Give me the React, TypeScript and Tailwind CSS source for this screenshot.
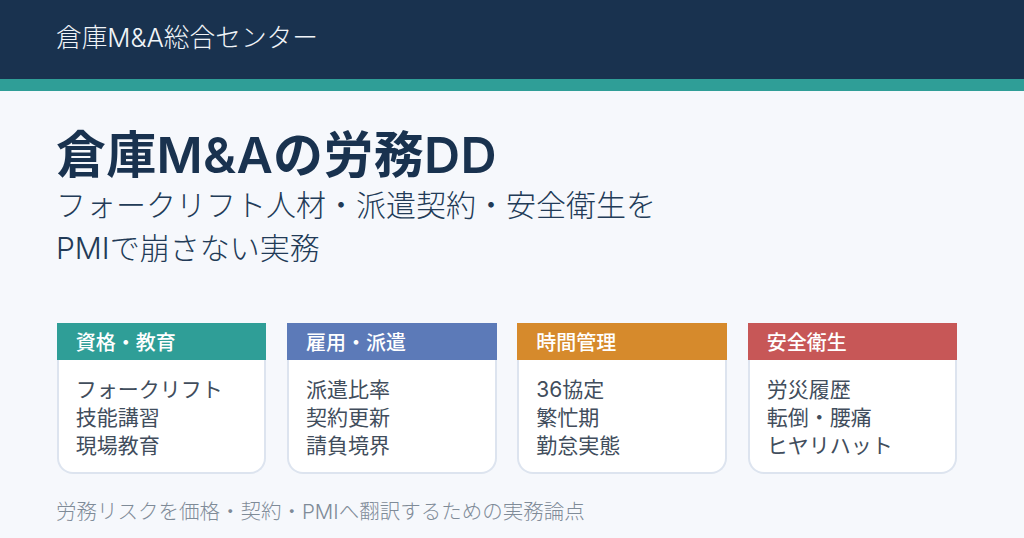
const FONT = 'Inter,"Noto Sans CJK JP",sans-serif';
const cards = [
  { t: "資格・教育", c: "bg-[#2f9e97]", l: ["フォークリフト", "技能講習", "現場教育"] },
  { t: "雇用・派遣", c: "bg-[#5c7ab8]", l: ["派遣比率", "契約更新", "請負境界"] },
  { t: "時間管理", c: "bg-[#d68a2c]", l: ["36協定", "繁忙期", "勤怠実態"] },
  { t: "安全衛生", c: "bg-[#c75757]", l: ["労災履歴", "転倒・腰痛", "ヒヤリハット"] },
];
export default function App() {
  return (
    <div className="w-[1024px] h-[538px] overflow-hidden bg-[#f6f8fc] flex flex-col" style={{ fontFamily: FONT }}>
      <div className="h-[79px] bg-[#19324f] flex items-center pl-[56px] text-[25.7px] font-light text-[#f0f4f8] pb-[3px]">倉庫M&amp;A総合センター</div>
      <div className="h-[12px] bg-[#2f9e97]" />
      <div className="pl-[56px] pt-[27px]">
        <h1 className="text-[50px] leading-[74px] font-semibold tracking-[0.3px] text-[#19324f]">倉庫M&amp;Aの労務DD</h1>
        <p className="text-[30px] leading-[43px] font-light text-[#223b57] -mt-[8px]">フォークリフト人材・派遣契約・安全衛生を</p>
        <p className="text-[30px] leading-[43px] font-light text-[#223b57]">PMIで崩さない実務</p>
      </div>
      <div className="flex gap-[20.83px] pl-[56.7px] mt-[53px]">
        {cards.map((k) => (
          <div key={k.t} className="w-[209.5px] h-[151px] flex flex-col">
            <div className={`h-[37px] shrink-0 ${k.c} text-white font-medium text-[20px] leading-[41px] pl-[19px]`}>{k.t}</div>
            <div className="flex-1 bg-white rounded-b-[16px] border-2 border-t-0 border-[#dde4ef] pl-[17px] pt-[16px] text-[21px] leading-[28px] font-normal text-[#414d5c]">
              {k.l.map((x) => <div key={x}>{x}</div>)}
            </div>
          </div>
        ))}
      </div>
      <p className="pl-[56px] mt-[23px] text-[20.5px] leading-[30px] font-light text-[#7f8b98]">労務リスクを価格・契約・PMIへ翻訳するための実務論点</p>
    </div>
  );
}
